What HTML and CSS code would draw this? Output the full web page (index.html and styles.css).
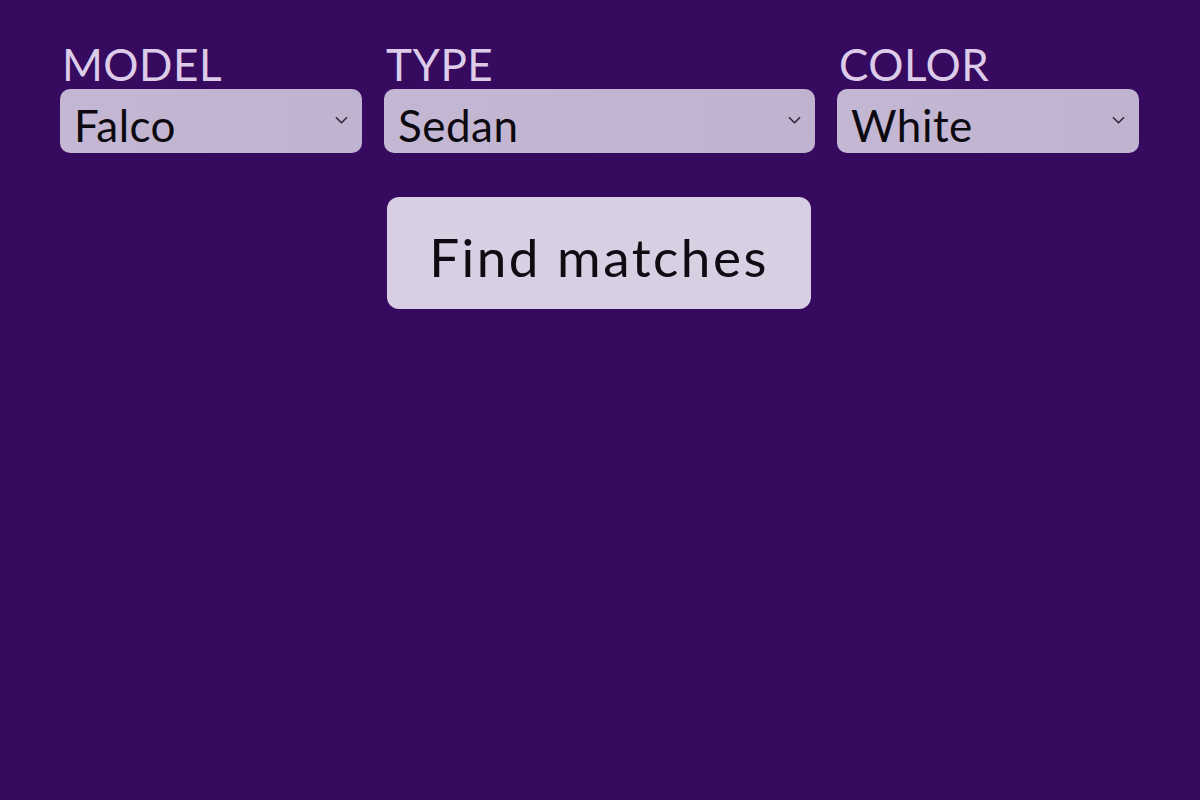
FILE: index.html
```html
<!DOCTYPE html>
<html>
<head>
<meta charset="utf-8">
<link rel="stylesheet" href="styles.css">
</head>
<body>
<main class="page">
  <div class="filters">
    <div class="field">
      <span class="label">MODEL</span>
      <div class="select"><span class="value">Falco</span><svg class="chev" viewBox="0 0 14 8"><path d="M1 1 L7 7 L13 1"/></svg></div>
    </div>
    <div class="field">
      <span class="label">TYPE</span>
      <div class="select"><span class="value">Sedan</span><svg class="chev" viewBox="0 0 14 8"><path d="M1 1 L7 7 L13 1"/></svg></div>
    </div>
    <div class="field">
      <span class="label">COLOR</span>
      <div class="select"><span class="value">White</span><svg class="chev" viewBox="0 0 14 8"><path d="M1 1 L7 7 L13 1"/></svg></div>
    </div>
  </div>
  <div class="actions">
    <button class="find">Find matches</button>
  </div>
</main>
</body>
</html>
```

FILE: styles.css
```css
html, body {
  margin: 0;
  padding: 0;
  height: 100%;
  background: #360a5e;
}
body {
  font-family: "Lato", "Noto Sans", sans-serif;
}
.page {
  padding-top: 40px;
}
.filters {
  display: grid;
  grid-template-columns: 302px 431px 302px;
  column-gap: 22px;
  padding-left: 60px;
}
.field {
  display: flex;
  flex-direction: column;
}
.label {
  color: #dccbe9;
  font-size: 44px;
  line-height: 48px;
  letter-spacing: 0.5px;
  padding-left: 2px;
  margin-bottom: 1px;
}
.select {
  height: 64px;
  border-radius: 10px;
  background: linear-gradient(90deg, #c3b7d3, #bfb3cf);
  display: flex;
  align-items: center;
  justify-content: space-between;
  padding: 0 14px 0 14px;
  box-sizing: border-box;
}
.value {
  color: #0c0a10;
  font-size: 44px;
  line-height: 1;
  padding-top: 7px;
  letter-spacing: 0.5px;
}
.chev {
  width: 13px;
  height: 8px;
  fill: none;
  stroke: #2a2233;
  stroke-width: 1.6;
  margin-bottom: 2px;
}
.actions {
  display: flex;
  justify-content: center;
  margin-top: 44px;
}
.find {
  width: 424px;
  height: 112px;
  border: none;
  border-radius: 12px;
  background: #d8cfe3;
  color: #0e0b12;
  font-family: "Lato", "Noto Sans", sans-serif;
  font-size: 53px;
  letter-spacing: 2.5px;
  padding: 6px 0 0 0;
  margin-left: -2px;
}
```
